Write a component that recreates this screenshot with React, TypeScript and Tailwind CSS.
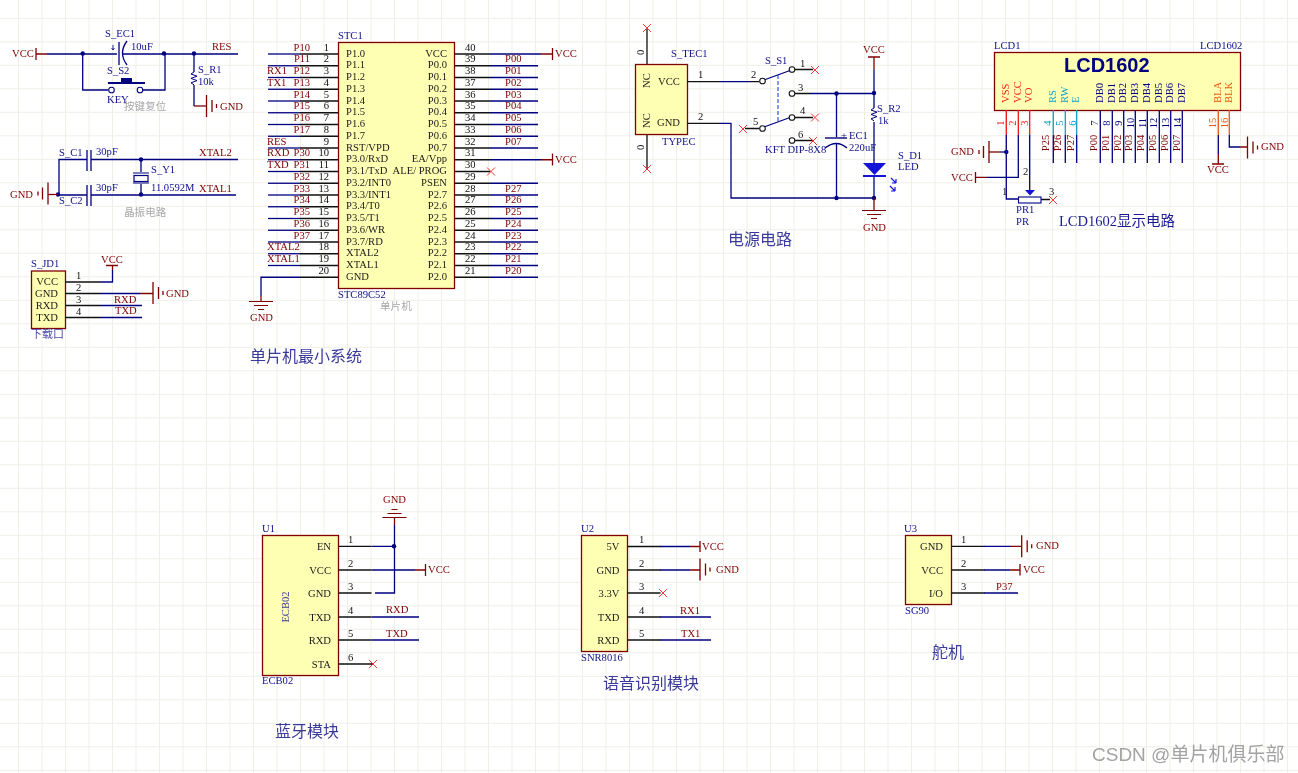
import React from "react";

const NAVY = "#000080";
const RED = "#800000";
const BLK = "#111111";
const INK = "#1a1a1a";
const NAME = "#10108c";
const FILL = "#ffffb4";

type TP = { x: number; y: number; children: React.ReactNode; c?: string; s?: number; a?: "start" | "middle" | "end"; r?: boolean };
const T = ({ x, y, children, c = INK, s = 10.6, a = "start", r = false }: TP) => (
  <text x={x} y={y} fill={c} fontSize={s} textAnchor={a} transform={r ? `rotate(-90 ${x} ${y})` : undefined}>
    {children}
  </text>
);
const W = ({ d, c = NAVY, w = 1.3 }: { d: string; c?: string; w?: number }) => <path d={d} fill="none" stroke={c} strokeWidth={w} />;
const Dot = ({ x, y }: { x: number; y: number }) => <circle cx={x} cy={y} r={2.2} fill={NAVY} />;
const X = ({ x, y }: { x: number; y: number }) => <path d={`M${x - 4} ${y - 4}L${x + 4} ${y + 4}M${x - 4} ${y + 4}L${x + 4} ${y - 4}`} stroke="#f02020" strokeWidth={0.9} fill="none" />;
const Ring = ({ x, y, c = NAVY }: { x: number; y: number; c?: string }) => <circle cx={x} cy={y} r={2.8} fill="#fff" stroke={c} strokeWidth={1.1} />;

const GndH = ({ x, y, dir = 1 }: { x: number; y: number; dir?: number }) => (
  <path d={`M${x} ${y - 11}V${y + 11}M${x + dir * 5.5} ${y - 6}V${y + 6}M${x + dir * 10} ${y - 2}V${y + 2}`} stroke={RED} strokeWidth={1.3} fill="none" />
);
const GndV = ({ x, y, dir = 1 }: { x: number; y: number; dir?: number }) => (
  <path d={`M${x - 12} ${y}H${x + 12}M${x - 7} ${y + dir * 4}H${x + 7}M${x - 3} ${y + dir * 8}H${x + 3}`} stroke={RED} strokeWidth={1.2} fill="none" />
);
const Body = ({ x, y, w, h }: { x: number; y: number; w: number; h: number }) => <rect x={x} y={y} width={w} height={h} fill={FILL} stroke={RED} strokeWidth={1.3} />;

const leftNets = ["P10", "P11", "P12", "P13", "P14", "P15", "P16", "P17", "", "P30", "P31", "P32", "P33", "P34", "P35", "P36", "P37", "", "", ""];
const leftPins = ["P1.0", "P1.1", "P1.2", "P1.3", "P1.4", "P1.5", "P1.6", "P1.7", "RST/VPD", "P3.0/RxD", "P3.1/TxD", "P3.2/INT0", "P3.3/INT1", "P3.4/T0", "P3.5/T1", "P3.6/WR", "P3.7/RD", "XTAL2", "XTAL1", "GND"];
const rightPins = ["VCC", "P0.0", "P0.1", "P0.2", "P0.3", "P0.4", "P0.5", "P0.6", "P0.7", "EA/Vpp", "ALE/ PROG", "PSEN", "P2.7", "P2.6", "P2.5", "P2.4", "P2.3", "P2.2", "P2.1", "P2.0"];
const rightNets = ["", "P00", "P01", "P02", "P03", "P04", "P05", "P06", "P07", "", "", "", "P27", "P26", "P25", "P24", "P23", "P22", "P21", "P20"];
const farLeft: Record<number, string> = { 2: "RX1", 3: "TX1", 8: "RES", 9: "RXD", 10: "TXD", 17: "XTAL2", 18: "XTAL1" };
const py = (i: number) => 54 + 11.75 * i;

const CYAN = "#10a0c8";
const ORANGE = "#e85a10";
const lcd: { n: string; x: number; c: string; nx: number }[] = [
  { n: "VSS", x: 1006.3, c: "#f01818", nx: 1003 },
  { n: "VCC", x: 1018.3, c: "#f01818", nx: 1015 },
  { n: "VO", x: 1029.7, c: "#f01818", nx: 1027 },
  { n: "RS", x: 1053.3, c: CYAN, nx: 1050 },
  { n: "RW", x: 1065.3, c: CYAN, nx: 1062 },
  { n: "E", x: 1076.7, c: CYAN, nx: 1075 },
  { n: "DB0", x: 1100.3, c: NAVY, nx: 1097 },
  { n: "DB1", x: 1112.3, c: NAVY, nx: 1109 },
  { n: "DB2", x: 1123.7, c: NAVY, nx: 1121 },
  { n: "DB3", x: 1135.3, c: NAVY, nx: 1133 },
  { n: "DB4", x: 1147.3, c: NAVY, nx: 1145 },
  { n: "DB5", x: 1159.3, c: NAVY, nx: 1156 },
  { n: "DB6", x: 1170.7, c: NAVY, nx: 1168 },
  { n: "DB7", x: 1182.3, c: NAVY, nx: 1180 },
  { n: "BLA", x: 1218.3, c: ORANGE, nx: 1215 },
  { n: "BLK", x: 1229.3, c: ORANGE, nx: 1227 },
];
const lcdNets: [string, number][] = [
  ["P25", 1049], ["P26", 1061], ["P27", 1074], ["P00", 1096.5], ["P01", 1108.5], ["P02", 1120.5], ["P03", 1132], ["P04", 1144], ["P05", 1156], ["P06", 1167.5], ["P07", 1179.5],
];

const Module = ({ labels, x, w, ax, nx, ys }: { labels: string[]; x: number; w: number; ax: number; nx: number; ys: number[] }) => (
  <>
    {labels.map((l, i) => (
      <g key={l}>
        <T x={ax} y={ys[i] + 3.5} a="end">{l}</T>
        <T x={nx} y={ys[i] - 3.5} c={BLK}>{i + 1}</T>
        <W d={`M${x + w} ${ys[i]}H${x + w + 33}`} c={BLK} />
      </g>
    ))}
  </>
);

export default function App() {
  const gx: number[] = [];
  for (let x = 18.5; x < 1298; x += 23.5) gx.push(x);
  const gy: number[] = [];
  for (let y = 18.3; y < 773; y += 23.5) gy.push(y);

  return (
    <div className="relative h-[773px] w-[1298px] overflow-hidden bg-white">
      <svg width={1298} height={773} viewBox="0 0 1298 773" className="block blur-[0.3px] font-['Liberation_Serif','Noto_Sans_CJK_SC',serif]">
        <g stroke="#efefe8" strokeWidth={1}>
          {gx.map((x) => <line key={x} x1={x} x2={x} y1={0} y2={773} />)}
          {gy.map((y) => <line key={y} y1={y} y2={y} x1={0} x2={1298} />)}
        </g>

        {/* reset circuit */}
        <T x={12} y={57} c={RED}>VCC</T>
        <W d="M36 48V60M36 54H47" c={RED} />
        <W d="M47 54H117M122 54H238M82.7 54V90H108M143 90H165V54M194 54V72M194 85V106" />
        <path d="M194 72l-3 2l6 2.2l-6 2.2l6 2.2l-6 2.2l3 2" fill="none" stroke={NAVY} strokeWidth={1} />
        <W d="M194 106H206" c={RED} />
        <GndH x={206.5} y={106} />
        <W d="M119 42V65" />
        <W d="M127 41Q118 53 127 65" />
        <W d="M113 45V50M111.5 48L113 50L114.5 48" w={0.8} />
        <Dot x={82.7} y={53.5} /><Dot x={164} y={53.5} /><Dot x={194} y={53.5} />
        <Ring x={111.5} y={90} /><Ring x={140} y={90} />
        <W d="M108 83H145" w={2} />
        <rect x={121} y={78} width={11} height={5} fill={NAVY} />
        <T x={105} y={37} c={NAME}>S_EC1</T>
        <T x={131} y={50} c={NAME}>10uF</T>
        <T x={107} y={74} c={NAME}>S_S2</T>
        <T x={107} y={103} c={NAME}>KEY</T>
        <T x={124} y={110} c="#a8a8a8">按键复位</T>
        <T x={212} y={50} c={RED}>RES</T>
        <T x={198} y={73} c={NAME}>S_R1</T>
        <T x={198} y={85} c={NAME}>10k</T>
        <T x={220} y={110} c={RED}>GND</T>

        {/* crystal circuit */}
        <T x={59} y={156} c={NAME}>S_C1</T>
        <T x={96} y={155} c={NAME}>30pF</T>
        <T x={199} y={156} c={RED}>XTAL2</T>
        <W d="M59 194V159.5H87M91 159.5H238M87 150V171M91 150V171M58 195H87M91 195H236M87 185V206M91 185V206M141 160V172M141 184V195" />
        <W d="M133 173H149M133 183H149" w={1} />
        <rect x={134} y={175.5} width={14} height={6} fill="none" stroke={NAVY} strokeWidth={1.2} />
        <Dot x={141} y={159.5} /><Dot x={141} y={194.5} /><Dot x={58} y={194.5} />
        <T x={151} y={173} c={NAME}>S_Y1</T>
        <T x={151} y={191} c={NAME}>11.0592M</T>
        <T x={199} y={192} c={RED}>XTAL1</T>
        <T x={96} y={191} c={NAME}>30pF</T>
        <T x={59} y={204} c={NAME}>S_C2</T>
        <T x={10} y={198} c={RED}>GND</T>
        <W d="M48 194.5H58" c={RED} />
        <GndH x={48} y={193.5} dir={-1} />
        <T x={124} y={216} c="#a8a8a8">晶振电路</T>

        {/* download header */}
        <T x={31} y={267} c={NAME}>S_JD1</T>
        <Body x={31.5} y={271} w={34} h={57.5} />
        {["VCC", "GND", "RXD", "TXD"].map((l, i) => {
          const y = [282, 293.5, 305.5, 317.5][i];
          return (
            <g key={l}>
              <T x={58} y={y + 3} a="end">{l}</T>
              <T x={76} y={y - 3} c={BLK}>{i + 1}</T>
              <W d={`M65 ${y}H100`} c={BLK} />
            </g>
          );
        })}
        <W d="M100 282H112.5V270M100 293.5H140M100 305.5H142M100 317.5H142" />
        <W d="M106 265.5H118M112.5 265.5V270M140 293.5H153" c={RED} />
        <GndH x={153} y={293} />
        <T x={101} y={263} c={RED}>VCC</T>
        <T x={166} y={297} c={RED}>GND</T>
        <T x={114} y={303} c={RED}>RXD</T>
        <T x={115} y={314} c={RED}>TXD</T>
        <T x={31} y={338} c="#4a4aa8" s={11}>下载口</T>

        {/* MCU */}
        <T x={338} y={39} c={NAME}>STC1</T>
        <Body x={338.5} y={42.5} w={116} h={246} />
        {leftPins.map((l, i) => (
          <g key={l}>
            <T x={346} y={py(i) + 2.5}>{l}</T>
            <T x={329} y={py(i) - 3.5} a="end" c={BLK}>{i + 1}</T>
            <W d={`M300 ${py(i)}H338`} c={BLK} />
            {i < 19 && <W d={`M268 ${py(i)}H300`} />}
            {leftNets[i] && <T x={310} y={py(i) - 3.5} a="end" c={RED}>{leftNets[i]}</T>}
            {farLeft[i] && <T x={267} y={py(i) - 3.5} c={RED}>{farLeft[i]}</T>}
          </g>
        ))}
        <W d="M300 277.25H261V296" />
        <W d="M261 296V301" c={RED} />
        <GndV x={261} y={301.5} />
        <T x={250} y={321} c={RED}>GND</T>
        {rightPins.map((l, i) => (
          <g key={l}>
            <T x={447} y={py(i) + 2.5} a="end">{l}</T>
            <T x={465} y={py(i) - 3.5} c={BLK}>{40 - i}</T>
            <W d={`M454.5 ${py(i)}H490`} c={BLK} />
            {i !== 10 && <W d={`M490 ${py(i)}H${i === 0 || i === 9 ? 541 : 538}`} />}
            {rightNets[i] && <T x={505} y={py(i) - 3.5} c={RED}>{rightNets[i]}</T>}
          </g>
        ))}
        <X x={491} y={171.5} />
        <W d="M541 54H552.5M552.5 48V60M541 159.75H552.5M552.5 153.5V165.5" c={RED} />
        <T x={555} y={57} c={RED}>VCC</T>
        <T x={555} y={162.5} c={RED}>VCC</T>
        <T x={338} y={298} c={NAME}>STC89C52</T>
        <T x={380} y={310} c="#a8a8a8">单片机</T>
        <T x={250} y={362} c="#3a3a9a" s={16}>单片机最小系统</T>

        {/* power circuit */}
        <W d="M647 64V29M647 135V170" c={BLK} />
        <X x={647} y={28} /><X x={647} y={169} />
        <T x={644} y={55} r>0</T>
        <T x={644} y={150} r>0</T>
        <T x={671} y={57} c={NAME}>S_TEC1</T>
        <Body x={635.5} y={64.5} w={52} h={70} />
        <T x={650} y={88} r>NC</T>
        <T x={650} y={128} r>NC</T>
        <T x={658} y={85}>VCC</T>
        <T x={657} y={126}>GND</T>
        <T x={662} y={145} c={NAME}>TYPEC</T>
        <W d="M687 81.7H720M750 81.7H759M687 123.3H720" c={BLK} />
        <W d="M720 81.7H750M720 123.3H731V198H874" />
        <T x={698} y={78} c={BLK}>1</T>
        <T x={698} y={120} c={BLK}>2</T>
        <T x={765} y={64} c={NAME}>S_S1</T>
        <T x={751} y={78} c={BLK}>2</T>
        <T x={800} y={67} c={BLK}>1</T>
        <T x={798} y={91} c={BLK}>3</T>
        <T x={800} y={114} c={BLK}>4</T>
        <T x={753} y={125} c={BLK}>5</T>
        <T x={798} y={138} c={BLK}>6</T>
        <W d="M764 80L790 70.5M764 127L790 117.5" />
        <path d="M778 75V122" stroke="#1030e0" strokeWidth={1} strokeDasharray="4 2" fill="none" />
        <W d="M795 69.5H813M795 117.5H813M795 140.5H813M745 128.5H759M795 93.5H810" c={BLK} />
        <W d="M810 93.5H874M874 70V108M874 122V163M874 176V198M836.5 93.5V137M836.5 144V198" />
        <W d="M825 138H847" w={1.4} />
        <W d="M825 148Q836.5 139 847 148" w={1.4} />
        <path d="M874 108l-3 2l6 2.2l-6 2.2l6 2.2l-6 2.2l3 2" fill="none" stroke={NAVY} strokeWidth={1} />
        {[[762.5, 81], [792, 69.5], [792, 93.5], [762.5, 128.5], [792, 117.5], [792, 140.5]].map(([x, y]) => <Ring key={`${x}-${y}`} x={x} y={y} c={BLK} />)}
        <X x={815} y={70} /><X x={815} y={117.5} /><X x={813} y={141} /><X x={743} y={129} />
        <Dot x={836.5} y={93.5} /><Dot x={874} y={93} /><Dot x={836.5} y={198} /><Dot x={874} y={198} />
        <T x={765} y={153} c={NAME}>KFT DIP-8X8</T>
        <T x={841} y={139} c={NAME}>+</T>
        <T x={849} y={139} c={NAME}>EC1</T>
        <T x={849} y={151} c={NAME}>220uF</T>
        <T x={863} y={53} c={RED}>VCC</T>
        <W d="M868 57H880M874 57V70M874 198V210" c={RED} />
        <T x={877} y={112} c={NAME}>S_R2</T>
        <T x={878} y={124} c={NAME}>1k</T>
        <polygon points="863,163 886,163 874.5,175" fill="#1414d8" />
        <W d="M863 176H886" c="#1414d8" w={2} />
        <W d="M891 178L896 183M896 183V179M896 183H892M890 186L895 191M895 191V187M895 191H891" c="#1414d8" w={1.2} />
        <T x={898} y={159} c={NAME}>S_D1</T>
        <T x={898} y={170} c={NAME}>LED</T>
        <GndV x={874} y={210.5} />
        <T x={863} y={231} c={RED}>GND</T>
        <T x={728} y={245} c="#3a3a9a" s={16}>电源电路</T>

        {/* LCD */}
        <T x={994} y={49} c={NAME}>LCD1</T>
        <T x={1200} y={49} c={NAME}>LCD1602</T>
        <Body x={994.5} y={52.5} w={246} h={58} />
        <text x={1064} y={71.5} fontSize={20} fontWeight={700} fill={NAVY} className="font-['Liberation_Sans',sans-serif]">LCD1602</text>
        {lcd.map((p, i) => (
          <g key={p.n}>
            <W d={`M${p.x} 110V135`} c={p.c} />
            <T x={p.x + 2.5} y={103} c={p.c} r>{p.n}</T>
            <text x={p.nx + 1} y={123} fill={p.c} fontSize={10.5} textAnchor="middle" transform={`rotate(-90 ${p.nx + 1} 123)`}>{i + 1}</text>
            {i > 2 && i < 14 && <W d={`M${p.x} 135V163`} />}
          </g>
        ))}
        {lcdNets.map(([n, x]) => (
          <text key={n} x={x} y={143} fill={RED} fontSize={10.5} textAnchor="middle" transform={`rotate(-90 ${x} 143)`}>{n}</text>
        ))}
        <W d="M1006.3 135V199H1018.5M1018.3 135V177.3H987M1029.7 135V180" />
        <W d="M1029.7 180V190M1041 199.5H1050" c={BLK} />
        <polygon points="1025,190 1035,190 1030,195.5" fill="#1414d8" />
        <rect x={1018.5} y={197} width={22.5} height={6} fill="#fff" stroke={NAVY} strokeWidth={1.1} />
        <X x={1053} y={200} />
        <T x={1002} y={195} c={INK}>1</T>
        <T x={1023} y={175} c={INK}>2</T>
        <T x={1049} y={195} c={INK}>3</T>
        <Dot x={1006.3} y={152} />
        <W d="M989 152H1000" c={RED} />
        <W d="M1000 152H1006" />
        <GndH x={989} y={152} dir={-1} />
        <T x={951} y={155} c={RED}>GND</T>
        <T x={951} y={181} c={RED}>VCC</T>
        <W d="M975.5 172V183M975.5 177.3H987" c={RED} />
        <T x={1016} y={213} c={NAME}>PR1</T>
        <T x={1016} y={225} c={NAME}>PR</T>
        <text x={1059} y={226} fill="#1c1c90" fontSize={14.5}>LCD1602显示电路</text>
        <W d="M1218.3 135V154M1229.3 135V147H1240" />
        <W d="M1218.3 154V164M1212 164H1224M1240 147H1247.5" c={RED} />
        <T x={1207} y={173} c={RED}>VCC</T>
        <GndH x={1247.5} y={147.5} />
        <T x={1261} y={150} c={RED}>GND</T>

        {/* bluetooth */}
        <T x={262} y={532} c={NAME}>U1</T>
        <Body x={262.5} y={535.5} w={76} h={140} />
        <T x={289} y={607} c="#3a3a9a" a="middle" r>ECB02</T>
        <Module labels={["EN", "VCC", "GND", "TXD", "RXD", "STA"]} x={262.5} w={76} ax={331} nx={348} ys={[546.3, 570, 593, 617, 640, 664]} />
        <W d="M371.5 546.3H394.5M394.5 525V593H375M371.5 570H415M371.5 617H419M371.5 640H419" />
        <W d="M394.5 517V525M415 570H425.5M425.5 564V576" c={RED} />
        <GndV x={394.5} y={517.5} dir={-1} />
        <Dot x={394} y={546.3} />
        <W d="M371 664H373" c={BLK} />
        <X x={373} y={664} />
        <T x={383} y={503} c={RED}>GND</T>
        <T x={428} y={573} c={RED}>VCC</T>
        <T x={386} y={613} c={RED}>RXD</T>
        <T x={386} y={637} c={RED}>TXD</T>
        <T x={262} y={684} c={NAME}>ECB02</T>
        <T x={275} y={737} c="#3a3a9a" s={16}>蓝牙模块</T>

        {/* voice */}
        <T x={581} y={532} c={NAME}>U2</T>
        <Body x={581.5} y={535.5} w={46} h={116} />
        <Module labels={["5V", "GND", "3.3V", "TXD", "RXD"]} x={581.5} w={46} ax={619.5} nx={639} ys={[546.5, 570, 593, 617, 640]} />
        <W d="M660 546.5H690M660 570H690M660 617H711M660 640H711" />
        <W d="M690 546.5H700M700 541V552M690 570H700" c={RED} />
        <GndH x={700} y={569.5} />
        <X x={663} y={593} />
        <T x={702} y={550} c={RED}>VCC</T>
        <T x={716} y={573} c={RED}>GND</T>
        <T x={680} y={614} c={RED}>RX1</T>
        <T x={681} y={637} c={RED}>TX1</T>
        <T x={581} y={661} c={NAME}>SNR8016</T>
        <T x={603} y={689} c="#3a3a9a" s={16}>语音识别模块</T>

        {/* servo */}
        <T x={904} y={532} c={NAME}>U3</T>
        <Body x={905.5} y={535.5} w={46} h={69} />
        <Module labels={["GND", "VCC", "I/O"]} x={905.5} w={46} ax={943} nx={961} ys={[546.3, 570, 593]} />
        <W d="M984 546.3H1010M984 570H1010M984 593H1018" />
        <W d="M1010 546.3H1021.7M1010 570H1020M1020 564V575.5" c={RED} />
        <GndH x={1021.7} y={546.3} />
        <T x={1036} y={549} c={RED}>GND</T>
        <T x={1023} y={573} c={RED}>VCC</T>
        <T x={996} y={590} c={RED}>P37</T>
        <T x={905} y={614} c={NAME}>SG90</T>
        <T x={932} y={658} c="#3a3a9a" s={16}>舵机</T>

        {/* watermark */}
        <text x={1092} y={761} fontSize={19} fill="#a3a3a3" className="font-['Liberation_Sans','Noto_Sans_CJK_SC',sans-serif]">CSDN @单片机俱乐部</text>
      </svg>
    </div>
  );
}
